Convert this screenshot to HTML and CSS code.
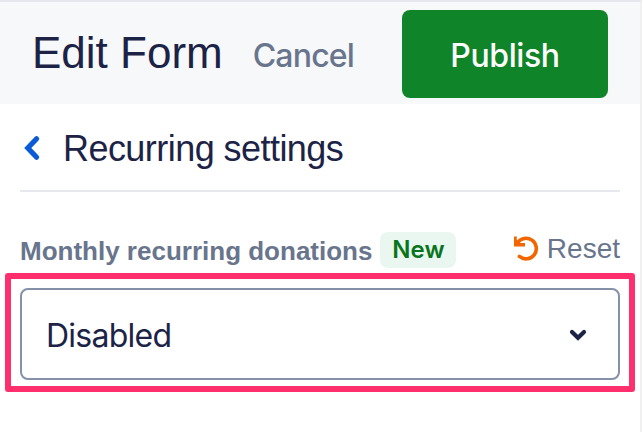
FILE: index.html
```html
<!DOCTYPE html>
<html lang="en">
    <head>
        <meta charset="utf-8">
        <title>Edit Form</title>
        <link rel="stylesheet" href="styles.css">
    </head>

    <body>
        <div class="panel">
            <header class="topBar">
                <h1 class="title">Edit Form</h1>
                <a class="cancel">Cancel</a>
                <button class="publish">Publish</button>
            </header>

            <div class="settings">
                <div class="sectionHeader">
                    <svg class="backIcon" width="18" height="26" viewBox="0 0 18 26">
                        <path d="M13.6 3.8 L4.8 13 L13.6 22.2"/>
                    </svg>
                    <h2>Recurring settings</h2>
                </div>

                <div class="fieldHeader">
                    <label class="fieldLabel">Monthly recurring donations</label>
                    <span class="badge">New</span>
                    <a class="reset">
                        <svg class="resetIcon" width="26" height="26" viewBox="0 0 26 26">
                            <path class="arrow" d="M1 0.5 L3.8 0.5 L3.8 4.1 L6.8 7.1 L12 7.1 L12 10.5 L1 10.5 Z"/>
                            <path class="arc" d="M4.4 6.9 A10.3 10.3 0 1 1 6.4 20.4"/>
                        </svg>
                        <span>Reset</span>
                    </a>
                </div>

                <div class="highlight">
                    <div class="select">
                        <span class="value">Disabled</span>
                        <svg class="chevron" width="18" height="12" viewBox="0 0 18 12">
                            <path d="M3 3 L9 8.8 L15 3"/>
                        </svg>
                    </div>
                </div>
            </div>
        </div>
    </body>
</html>
```
FILE: styles.css
```css
* {
    box-sizing: border-box;
}

body {
    margin: 0;
    background-color: #fff;
    color: #1c2346;
    font-family: "Liberation Sans", Arial, sans-serif;
}

.panel {
    width: 642px;
    height: 432px;
    border-top: 2px solid #e7e8ef;
    border-right: 2px solid #f0f0f2;
    overflow: hidden;
}

.topBar {
    display: flex;
    align-items: center;
    height: 102px;
    padding: 2px 32px 0 32px;
    background-color: #f7f8fa;
}

.title {
    margin: 0;
    padding-bottom: 2px;
    font-size: 44px;
    font-weight: normal;
    line-height: 50px;
}

.cancel {
    margin-left: 30px;
    padding-top: 3px;
    color: #68758d;
    font-family: Inter, sans-serif;
    font-size: 32px;
    font-weight: 500;
    letter-spacing: -0.8px;
    line-height: 40px;
}

.publish {
    width: 206px;
    height: 88px;
    margin-left: auto;
    padding: 3px 0 0;
    border: none;
    border-radius: 8px;
    background-color: #0f8428;
    color: #fff;
    font-family: Inter, sans-serif;
    font-size: 32px;
    font-weight: 500;
    letter-spacing: -0.4px;
}

.settings {
    padding: 0 20px;
}

.sectionHeader {
    display: flex;
    align-items: center;
    height: 88px;
    padding-top: 2px;
    border-bottom: 2px solid #e5e9ee;
}

.sectionHeader h2 {
    margin: 0 0 0 22px;
    padding-top: 2px;
    font-size: 36px;
    font-weight: normal;
    letter-spacing: -0.55px;
}

.backIcon {
    margin-left: 3px;
}

.backIcon path {
    fill: none;
    stroke: #0b5bd7;
    stroke-width: 5.2;
    stroke-linecap: round;
}

.fieldHeader {
    display: flex;
    align-items: center;
    height: 36px;
    margin-top: 40px;
}

.fieldLabel {
    padding-top: 2px;
    color: #68758d;
    font-size: 26px;
    font-weight: bold;
}

.badge {
    width: 76px;
    height: 36px;
    margin-left: 8px;
    border-radius: 8px;
    background-color: #eaf7f1;
    color: #08751c;
    font-family: Inter, sans-serif;
    font-size: 24px;
    font-weight: 600;
    line-height: 36px;
    text-align: center;
}

.reset {
    display: flex;
    align-items: center;
    margin-left: auto;
    padding-bottom: 2px;
    color: #68758d;
    font-size: 28px;
    line-height: 32px;
}

.resetIcon {
    margin-right: 8px;
}

.resetIcon .arrow {
    fill: #f26600;
}

.resetIcon .arc {
    fill: none;
    stroke: #f26600;
    stroke-width: 3.6;
    stroke-linecap: round;
}

.highlight {
    margin: 5px -15px 0;
    padding: 9px 9px 6px;
    border: 6px solid #ff2e6d;
    border-radius: 3px;
}

.select {
    display: flex;
    align-items: center;
    justify-content: space-between;
    height: 92px;
    padding: 2px 31px 0 24px;
    border: 2px solid #8491a8;
    border-radius: 8px;
}

.value {
    font-family: Inter, sans-serif;
    font-size: 32px;
    letter-spacing: -0.75px;
}

.chevron path {
    fill: none;
    stroke: #1c2346;
    stroke-width: 4.2;
    stroke-linecap: round;
}
```
